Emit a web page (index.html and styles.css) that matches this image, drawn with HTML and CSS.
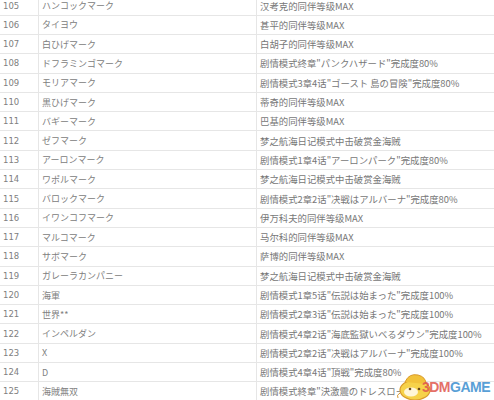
FILE: index.html
```html
<!DOCTYPE html>
<html lang="ja">
<head>
    <meta charset="UTF-8">
    <title>マーク一覧</title>
    <link rel="stylesheet" href="styles.css">
</head>
<body>
    <div class="sheet">
        <div class="row"><div class="num">105</div><div class="name">ハンコックマーク</div><div class="desc">汉考克的同伴等级MAX</div></div>
        <div class="row"><div class="num">106</div><div class="name">タイヨウ</div><div class="desc">甚平的同伴等级MAX</div></div>
        <div class="row"><div class="num">107</div><div class="name">白ひげマーク</div><div class="desc">白胡子的同伴等级MAX</div></div>
        <div class="row"><div class="num">108</div><div class="name">ドフラミンゴマーク</div><div class="desc">剧情模式终章"パンクハザード"完成度80%</div></div>
        <div class="row"><div class="num">109</div><div class="name">モリアマーク</div><div class="desc">剧情模式3章4话"ゴースト 島の冒険"完成度80%</div></div>
        <div class="row"><div class="num">110</div><div class="name">黒ひげマーク</div><div class="desc">蒂奇的同伴等级MAX</div></div>
        <div class="row"><div class="num">111</div><div class="name">バギーマーク</div><div class="desc">巴基的同伴等级MAX</div></div>
        <div class="row"><div class="num">112</div><div class="name">ゼフマーク</div><div class="desc">梦之航海日记模式中击破赏金海贼</div></div>
        <div class="row"><div class="num">113</div><div class="name">アーロンマーク</div><div class="desc">剧情模式1章4话"アーロンパーク"完成度80%</div></div>
        <div class="row"><div class="num">114</div><div class="name">ワポルマーク</div><div class="desc">梦之航海日记模式中击破赏金海贼</div></div>
        <div class="row"><div class="num">115</div><div class="name">バロックマーク</div><div class="desc">剧情模式2章2话"决戦はアルバーナ"完成度80%</div></div>
        <div class="row"><div class="num">116</div><div class="name">イワンコフマーク</div><div class="desc">伊万科夫的同伴等级MAX</div></div>
        <div class="row"><div class="num">117</div><div class="name">マルコマーク</div><div class="desc">马尔科的同伴等级MAX</div></div>
        <div class="row"><div class="num">118</div><div class="name">サボマーク</div><div class="desc">萨博的同伴等级MAX</div></div>
        <div class="row"><div class="num">119</div><div class="name">ガレーラカンパニー</div><div class="desc">梦之航海日记模式中击破赏金海贼</div></div>
        <div class="row"><div class="num">120</div><div class="name">海軍</div><div class="desc">剧情模式1章5话"伝説は始まった"完成度100%</div></div>
        <div class="row"><div class="num">121</div><div class="name">世界**</div><div class="desc">剧情模式2章3话"伝説は始まった"完成度100%</div></div>
        <div class="row"><div class="num">122</div><div class="name">インペルダン</div><div class="desc">剧情模式4章2话"海底監獄いべるダウン"完成度100%</div></div>
        <div class="row"><div class="num">123</div><div class="name">X</div><div class="desc">剧情模式2章2话"决戦はアルバーナ"完成度100%</div></div>
        <div class="row"><div class="num">124</div><div class="name">D</div><div class="desc">剧情模式4章4话"頂戦"完成度80%</div></div>
        <div class="row"><div class="num">125</div><div class="name">海賊無双</div><div class="desc">剧情模式終章"決激震のドレスロー</div></div>
    </div>

    <div class="watermark">
        <svg class="mascot" width="38" height="30" viewBox="0 0 38 30">
            <ellipse cx="19" cy="18" rx="15" ry="10" fill="#f6d24a" stroke="#d99a2b" stroke-width="1.2"/>
            <path d="M9 10 Q13 1 22 3 Q30 5 30 12" fill="#f2c23a" stroke="#d99a2b" stroke-width="1"/>
            <ellipse cx="15" cy="20" rx="7" ry="4.5" fill="#fff6d8"/>
            <circle cx="14" cy="17" r="1.3" fill="#6a4a1a"/>
            <circle cx="23" cy="17" r="1.3" fill="#6a4a1a"/>
            <path d="M4 21 Q0 23 2 26" fill="none" stroke="#d99a2b" stroke-width="1"/>
        </svg>
        <span class="wm-red">3DM</span><span class="wm-blue">GAME</span>
    </div>
</body>
</html>
```

FILE: styles.css
```css
body {
    margin: 0;
    padding: 0;
    background-color: #fff;
    font-family: "Noto Sans CJK SC", "Noto Sans CJK JP", sans-serif;
    color: #777;
    overflow: hidden;
}
.sheet {
    margin-top: -3.6px;
}
.row {
    display: grid;
    grid-template-columns: 38px 218px 1fr;
    height: 19.3px;
    box-sizing: border-box;
    border-bottom: 1px solid #e6e6e6;
}
.row > div {
    display: flex;
    align-items: center;
    white-space: nowrap;
    overflow: hidden;
}
.num {
    padding-left: 3px;
    font-family: "DejaVu Sans", sans-serif;
    font-size: 8.5px;
    color: #808080;
}
.name {
    border-left: 1px solid #e6e6e6;
    padding-left: 3px;
    font-family: "Noto Sans CJK JP", sans-serif;
    font-size: 9px;
    color: #808080;
}
.desc {
    border-left: 1px solid #e6e6e6;
    padding-left: 3px;
    font-size: 9.4px;
    color: #777;
}
.watermark {
    position: absolute;
    right: 4px;
    bottom: -2px;
    display: flex;
    align-items: center;
    height: 30px;
    font-family: "Liberation Sans", sans-serif;
    font-weight: bold;
    font-size: 14px;
    letter-spacing: -0.5px;
}
.mascot {
    margin-right: -12px;
}
.wm-red {
    color: #e0584e;
    opacity: 0.85;
}
.wm-blue {
    color: #3b8fd0;
    opacity: 0.85;
}
```
